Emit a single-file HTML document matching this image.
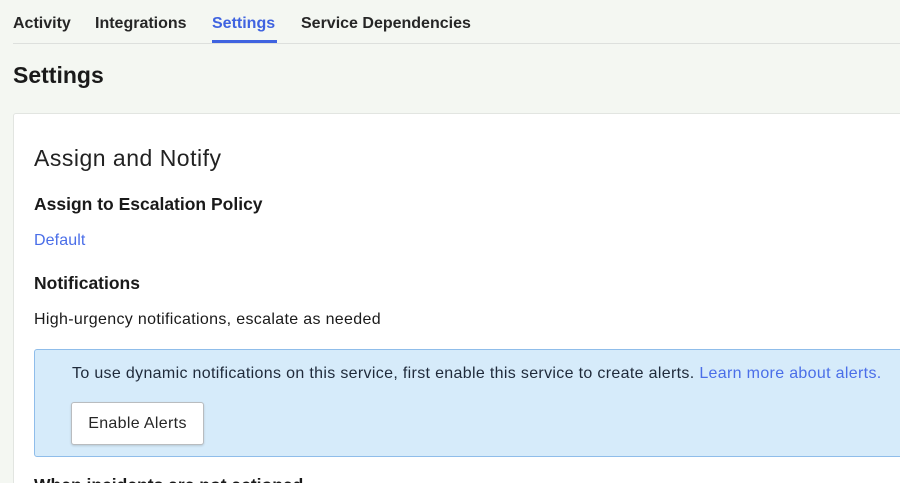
<!DOCTYPE html>
<html style="height:483px;overflow:hidden"><head><style>
body{margin:0;width:900px;height:483px;overflow:hidden;background:#f4f7f2;font-family:"Liberation Sans",sans-serif;color:#1a1a1a;position:relative}
.a{position:absolute;white-space:nowrap}
.tab{top:15px;font-size:16px;font-weight:bold;color:#262626}
.t{font-size:16px;letter-spacing:0.33px}
</style></head><body>
<div class="a tab" style="left:13px">Activity</div>
<div class="a tab" style="left:95px">Integrations</div>
<div class="a tab" style="left:212px;color:#3f63e0">Settings</div>
<div class="a tab" style="left:301px">Service Dependencies</div>
<div class="a" style="left:13px;top:43px;width:887px;height:1px;background:#dde0dd"></div>
<div class="a" style="left:212px;top:40px;width:65px;height:3px;background:#3f63e0"></div>
<div class="a" style="left:13px;top:62px;font-size:23px;font-weight:bold">Settings</div>
<div class="a" style="left:13px;top:113px;width:900px;height:380px;background:#fff;border:1px solid #e2e5e1;border-radius:3px"></div>
<div class="a" style="left:34px;top:145px;font-size:23px;letter-spacing:0.5px;color:#222">Assign and Notify</div>
<div class="a" style="left:34px;top:194px;font-size:17.5px;font-weight:bold">Assign to Escalation Policy</div>
<div class="a t" style="left:34px;top:232px;color:#4a6ee8;letter-spacing:0.1px">Default</div>
<div class="a" style="left:34px;top:273px;font-size:17.5px;font-weight:bold">Notifications</div>
<div class="a t" style="left:34px;top:311px">High-urgency notifications, escalate as needed</div>
<div class="a" style="left:34px;top:349px;width:880px;height:106px;background:#d6ebfa;border:1px solid #8fbdea;border-radius:3px"></div>
<div class="a t" style="left:72px;top:365px;color:#1f2a3a">To use dynamic notifications on this service, first enable this service to create alerts. <span style="color:#4a6ee8">Learn more about alerts.</span></div>
<div class="a t" style="left:71px;top:402px;width:131px;height:41px;background:#fff;border:1px solid #b9bcbf;border-radius:3px;box-shadow:0 1px 2px rgba(0,0,0,.15);line-height:41px;text-align:center;color:#262626">Enable Alerts</div>
<div class="a" style="left:34px;top:475px;font-size:17.5px;font-weight:bold">When incidents are not actioned</div>
</body></html>
